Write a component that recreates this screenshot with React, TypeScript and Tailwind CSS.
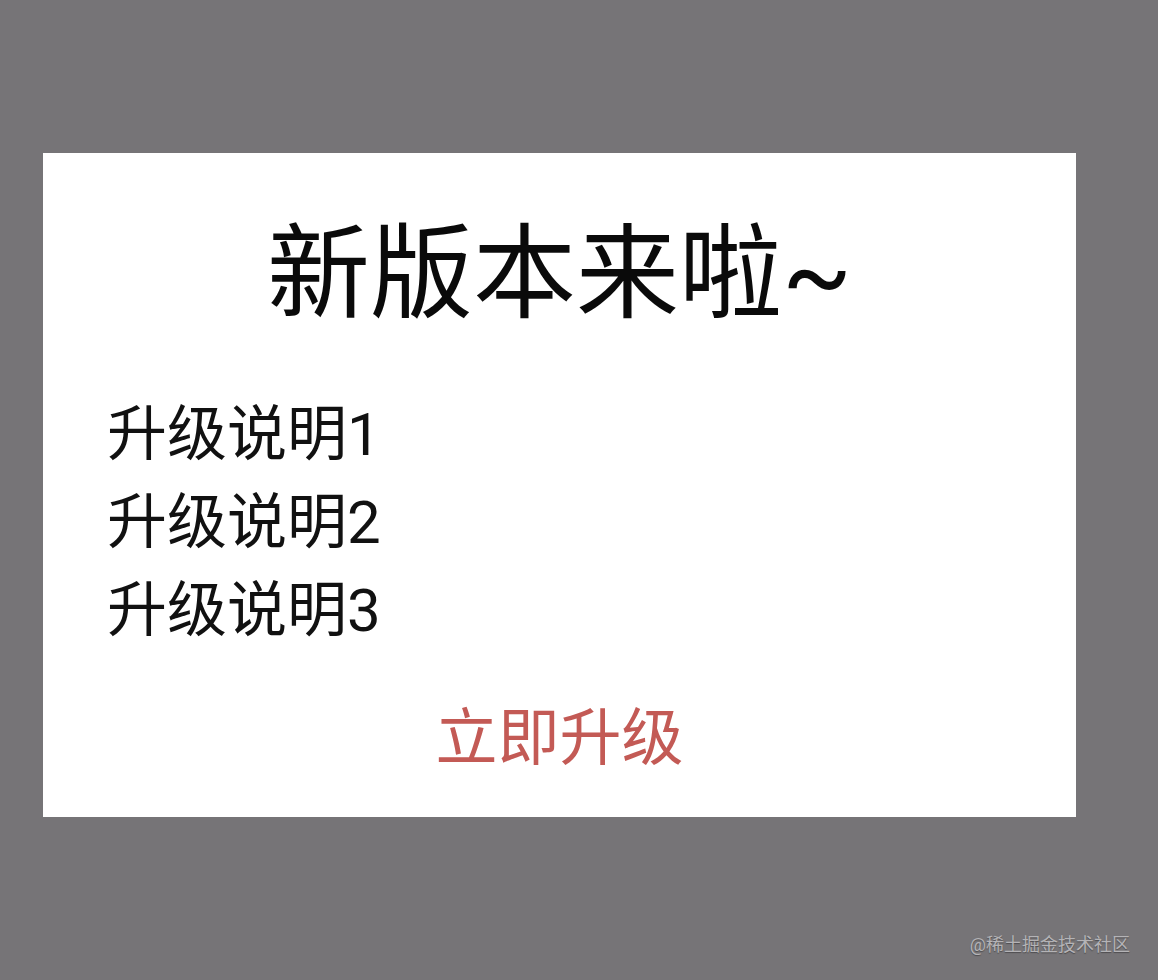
import React from "react";

const notes = ["升级说明1", "升级说明2", "升级说明3"];

const font = { fontFamily: 'Roboto, "Noto Sans CJK SC", sans-serif' };

export default function App() {
  return (
    <div
      className="relative h-[980px] w-full overflow-hidden bg-[#767477] pl-[43px] pt-[153px]"
      style={font}
    >
      {/* update dialog */}
      <div className="flex h-[664px] w-[1033px] flex-col bg-white pt-[70px]">
        <h1 className="text-center text-[103px] leading-none font-normal text-[#0a0a0a]">
          新版本来啦~
        </h1>
        <ul className="mt-[65px] flex flex-col pl-[64px]">
          {notes.map((n) => (
            <li key={n} className="text-[60px] leading-[88px] text-[#111]">
              {n}
            </li>
          ))}
        </ul>
        <button
          type="button"
          className="mx-auto mt-[53px] text-[62px] leading-none text-[#c35a55]"
        >
          立即升级
        </button>
      </div>

      <span className="absolute right-[28px] bottom-[26px] text-[18px] leading-none text-[#b4b3b6] [text-shadow:0_1px_1px_rgba(0,0,0,0.35)]">
        @稀土掘金技术社区
      </span>
    </div>
  );
}
